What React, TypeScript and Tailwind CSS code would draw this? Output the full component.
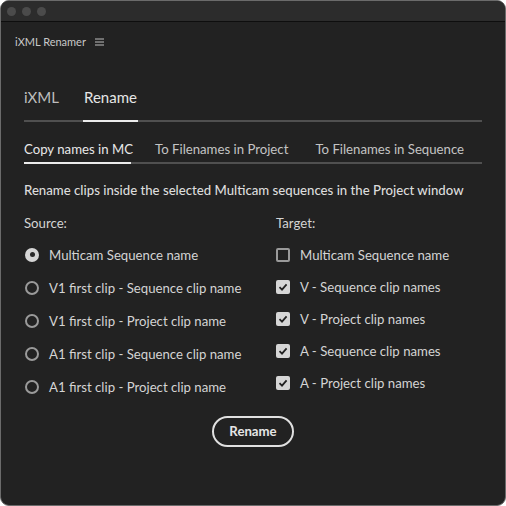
import { useState } from "react"

const sources = [
  "Multicam Sequence name",
  "V1 first clip - Sequence clip name",
  "V1 first clip - Project clip name",
  "A1 first clip - Sequence clip name",
  "A1 first clip - Project clip name",
]

const targets = [
  { label: "Multicam Sequence name", on: false },
  { label: "V - Sequence clip names", on: true },
  { label: "V - Project clip names", on: true },
  { label: "A - Sequence clip names", on: true },
  { label: "A - Project clip names", on: true },
]

function Radio({ checked }: { checked: boolean }) {
  return (
    <span
      className={
        checked
          ? "w-[14px] h-[14px] rounded-full bg-[#d6d6d6] flex items-center justify-center"
          : "w-[14px] h-[14px] rounded-full border-2 border-[#9a9a9a]"
      }
    >
      {checked && <span className="w-[5px] h-[5px] rounded-full bg-[#2a2a2a]" />}
    </span>
  )
}

function Check({ checked }: { checked: boolean }) {
  if (!checked) {
    return <span className="w-[14px] h-[14px] rounded-[2px] border-2 border-[#9a9a9a]" />
  }
  return (
    <span className="w-[14px] h-[14px] rounded-[2px] bg-[#d6d6d6] flex items-center justify-center">
      <svg width="10" height="10" viewBox="0 0 10 10">
        <path d="M1.5 5.2 L4 7.6 L8.6 2.4" fill="none" stroke="#222" strokeWidth="1.8" />
      </svg>
    </span>
  )
}

export default function App() {
  const [source, setSource] = useState(0)
  const [checks, setChecks] = useState(targets.map((t) => t.on))

  return (
    <div className="w-[506px] h-[506px] bg-white font-['Lato',sans-serif]">
      <div className="w-[506px] h-[506px] rounded-[9px] border border-[#6b6b6b] overflow-hidden flex flex-col bg-[#222222]">
        {/* title bar */}
        <div className="h-[21px] bg-[#2c2c2c] border-b border-[#0e0e0e] flex items-center gap-[6px] px-[6px]">
          <span className="w-[9px] h-[9px] rounded-full bg-[#4b4b4b]" />
          <span className="w-[9px] h-[9px] rounded-full bg-[#4b4b4b]" />
          <span className="w-[9px] h-[9px] rounded-full bg-[#4b4b4b]" />
        </div>

        <div className="h-[40px] flex items-center px-[14px] gap-[9px] text-[11px] text-[#c8c8c8]">
          <span>iXML Renamer</span>
          <svg width="9" height="8" viewBox="0 0 9 8">
            <path d="M0 1h9M0 4h9M0 7h9" stroke="#bdbdbd" strokeWidth="1" />
          </svg>
        </div>

        <div className="px-[23px]">
          {/* top tabs */}
          <div className="flex border-b-2 border-[#505050] w-[458px]">
            <div className="pt-[25px] pb-[13px] w-[59px] text-[15px] leading-[20px] text-[#bdbdbd]">iXML</div>
            <div className="pt-[25px] pb-[13px] w-[55px] text-[15px] leading-[20px] text-[#e6e6e6] border-b-2 border-[#ececec] -mb-[2px] text-center">
              Rename
            </div>
          </div>

          {/* sub tabs */}
          <div className="flex border-b-2 border-[#505050] w-[458px] text-[13.2px] leading-[18px] whitespace-nowrap">
            <div className="pt-[18px] pb-[2px] w-[107px] text-[#e8e8e8] border-b-2 border-[#ececec] -mb-[2px]">
              Copy names in MC
            </div>
            <div className="pt-[18px] pb-[4px] ml-[24px] text-[#c4c4c4]">To Filenames in Project</div>
            <div className="pt-[18px] pb-[4px] ml-[27px] text-[#c4c4c4]">To Filenames in Sequence</div>
          </div>

          <p className="mt-[17px] text-[13.2px] leading-[18px] text-[#dcdcdc] font-medium whitespace-nowrap">
            Rename clips inside the selected Multicam sequences in the Project window
          </p>

          <div className="grid grid-cols-[252px_1fr] mt-[15px] text-[13.2px] leading-[18px] text-[#d4d4d4]">
            <div>
              <div>Source:</div>
              <div className="mt-[6px] flex flex-col">
                {sources.map((s, i) => (
                  <button
                    key={s}
                    onClick={() => setSource(i)}
                    className="h-[33px] flex items-center gap-[10px] pl-[1px] text-left"
                  >
                    <Radio checked={source === i} />
                    <span>{s}</span>
                  </button>
                ))}
              </div>
            </div>
            <div>
              <div>Target:</div>
              <div className="mt-[7px] flex flex-col">
                {targets.map((t, i) => (
                  <button
                    key={t.label}
                    onClick={() => setChecks(checks.map((c, j) => (j === i ? !c : c)))}
                    className="h-[32px] flex items-center gap-[10px] text-left"
                  >
                    <Check checked={checks[i]} />
                    <span>{t.label}</span>
                  </button>
                ))}
              </div>
            </div>
          </div>

          <div className="flex justify-center mt-[13px]">
            <button className="w-[82px] h-[31px] rounded-full border-2 border-[#e0e0e0] text-[13.2px] font-bold text-[#e6e6e6]">
              Rename
            </button>
          </div>
        </div>
      </div>
    </div>
  )
}
